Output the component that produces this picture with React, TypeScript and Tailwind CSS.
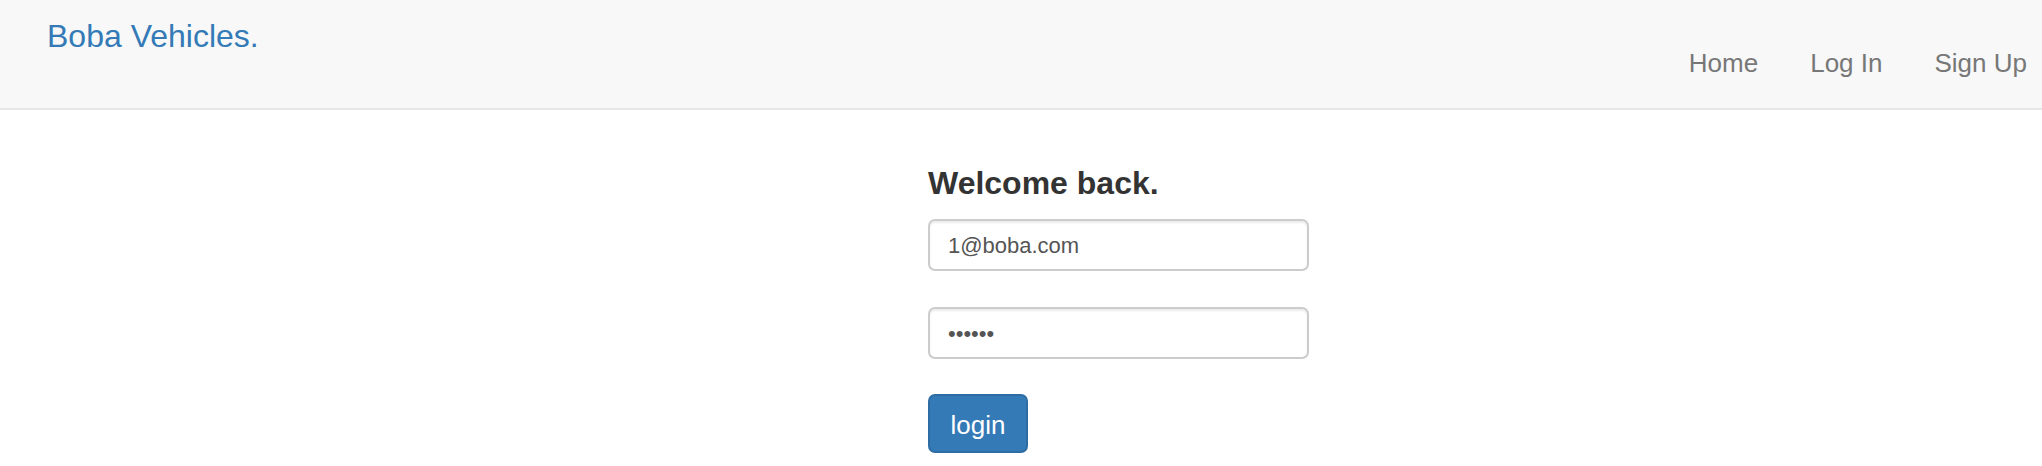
const NAV_LINKS = ['Home', 'Log In', 'Sign Up']

function Navbar() {
  return (
    <nav className="flex items-start justify-between h-[110px] bg-[#f8f8f8] border-b-2 border-[#e7e7e7]">
      <a href="#" className="pt-[20px] pl-[47px] text-[32px] leading-[32px] text-[#337ab7]">
        Boba Vehicles.
      </a>
      <ul className="flex gap-[52px] pt-[50px] pr-[15px]">
        {NAV_LINKS.map(label => (
          <li key={label}>
            <a href="#" className="block text-[26px] leading-[26px] text-[#777]">
              {label}
            </a>
          </li>
        ))}
      </ul>
    </nav>
  )
}

function LoginForm() {
  return (
    <form className="ml-[928px] mt-[57px] w-[381px]" onSubmit={e => e.preventDefault()}>
      <h3 className="text-[32px] leading-[32px] font-bold text-[#333]">Welcome back.</h3>
      <input
        type="email"
        defaultValue="1@boba.com"
        className="mt-[20px] block w-full h-[52px] px-[18px] pt-[2px] rounded-[7px] border-2 border-[#ccc] bg-white text-[22px] text-[#555] shadow-[inset_0_2px_2px_rgba(0,0,0,0.075)] outline-none"
      />
      <input
        type="password"
        defaultValue="123456"
        className="mt-[36px] block w-full h-[52px] px-[18px] pt-[2px] rounded-[7px] border-2 border-[#ccc] bg-white text-[22px] text-[#555] shadow-[inset_0_2px_2px_rgba(0,0,0,0.075)] outline-none"
      />
      <button
        type="submit"
        className="mt-[35px] h-[59px] w-[100px] pt-[2px] rounded-[7px] border-2 border-[#2e6da4] bg-[#337ab7] text-[26px] leading-[26px] text-white"
      >
        login
      </button>
    </form>
  )
}

export default function App() {
  return (
    <div className="min-h-[466px] bg-white" style={{ fontFamily: '"Liberation Sans", Arial, sans-serif' }}>
      <Navbar />
      <LoginForm />
    </div>
  )
}
